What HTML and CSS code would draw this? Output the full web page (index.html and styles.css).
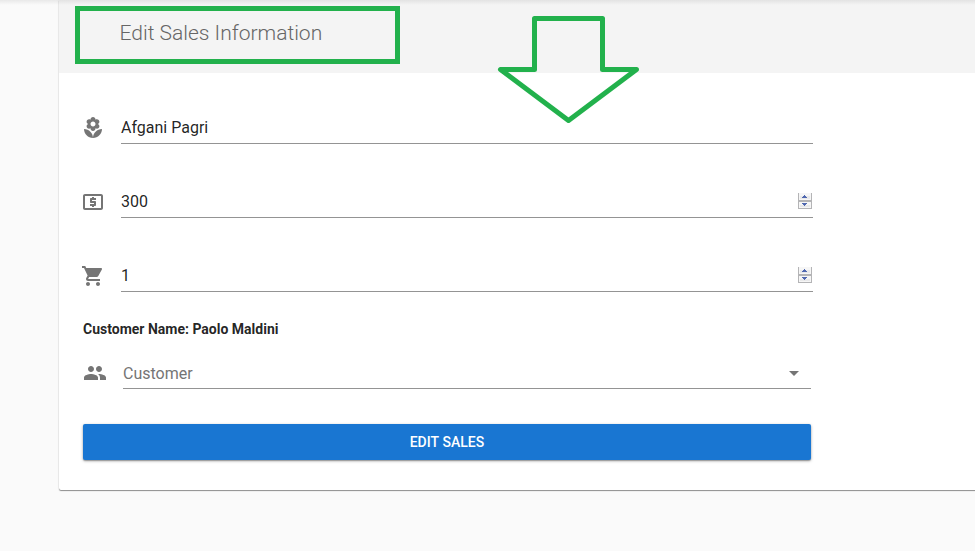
FILE: index.html
```html
<!DOCTYPE html>
<html lang="en">
<head>
<meta charset="utf-8">
<title>Edit Sales Information</title>
<link rel="stylesheet" href="styles.css">
</head>
<body>
<main class="card">
  <header class="card-header"><h1 class="title">Edit Sales Information</h1></header>
  <form class="form">
    <div class="row">
      <svg class="icon" viewBox="0 0 24 24"><path d="M12 22c4.970 0 9-4.030 9-9-4.970 0-9 4.030-9 9zM5.600 10.250c0 1.380 1.120 2.500 2.500 2.500.53 0 1.010-.16 1.420-.44l-.02.19c0 1.380 1.120 2.500 2.500 2.500s2.500-1.120 2.500-2.500l-.02-.19c.4.28.89.44 1.420.44 1.380 0 2.500-1.120 2.500-2.500 0-1-.59-1.850-1.430-2.250.84-.4 1.430-1.250 1.430-2.250 0-1.380-1.120-2.500-2.500-2.500-.53 0-1.010.16-1.420.44l.02-.19C14.500 2.120 13.380 1 12 1S9.500 2.120 9.500 3.500l.02.19c-.4-.28-.89-.44-1.420-.44-1.380 0-2.500 1.120-2.500 2.500 0 1 .59 1.850 1.430 2.250-.84.4-1.430 1.250-1.430 2.250zM12 5.500c1.380 0 2.500 1.120 2.500 2.500s-1.120 2.500-2.500 2.500S9.500 9.380 9.500 8s1.120-2.500 2.500-2.500zM3 13c0 4.970 4.030 9 9 9 0-4.970-4.030-9-9-9z"/></svg>
      <div class="field"><span class="value">Afgani Pagri</span></div>
    </div>
    <div class="row">
      <svg class="icon" viewBox="0 0 24 24"><path d="M11 17h2v-1h1c.55 0 1-.45 1-1v-3c0-.55-.45-1-1-1h-3v-1h4V8h-2V7h-2v1h-1c-.55 0-1 .45-1 1v3c0 .55.45 1 1 1h3v1H9v2h2v1zM20 4H4c-1.110 0-1.990.89-1.990 2L2 18c0 1.110.89 2 2 2h16c1.110 0 2-.89 2-2V6c0-1.110-.89-2-2-2zm0 14H4V6h16v12z"/></svg>
      <div class="field"><span class="value">300</span>
        <svg class="spinner" viewBox="0 0 14 16" shape-rendering="crispEdges"><path fill="#b4b4b6" d="M0 0h14v16H0z"/><path fill="#f6f6f6" d="M1 0h12v7H1zM1 9h12v6H1z"/><path fill="#e9e9ea" d="M2 3h10v3H2zM2 12h10v2H2z"/><path fill="#5068b0" d="M6 2h1v1h1v1h1v1H4V4h1V3h1zM4 10h5v1H8v1H7v1H6v-1H5v-1H4z"/></svg>
      </div>
    </div>
    <div class="row">
      <svg class="icon" viewBox="0 0 24 24"><path d="M7 18c-1.100 0-1.990.9-1.990 2S5.900 22 7 22s2-.9 2-2-.9-2-2-2zM1 2v2h2l3.600 7.590-1.350 2.450c-.16.28-.25.61-.25.96 0 1.100.9 2 2 2h12v-2H7.420c-.14 0-.25-.11-.25-.25l.03-.12.9-1.630h7.450c.75 0 1.410-.41 1.750-1.030l3.580-6.490c.08-.14.12-.31.12-.48 0-.55-.45-1-1-1H5.210l-.94-2H1zm16 16c-1.100 0-1.990.9-1.990 2s.89 2 1.990 2 2-.9 2-2-.9-2-2-2z"/></svg>
      <div class="field"><span class="value">1</span>
        <svg class="spinner" viewBox="0 0 14 16" shape-rendering="crispEdges"><path fill="#b4b4b6" d="M0 0h14v16H0z"/><path fill="#f6f6f6" d="M1 0h12v7H1zM1 9h12v6H1z"/><path fill="#e9e9ea" d="M2 3h10v3H2zM2 12h10v2H2z"/><path fill="#5068b0" d="M6 2h1v1h1v1h1v1H4V4h1V3h1zM4 10h5v1H8v1H7v1H6v-1H5v-1H4z"/></svg>
      </div>
    </div>
    <p class="customer-name">Customer Name: Paolo Maldini</p>
    <div class="row row-select">
      <svg class="icon" viewBox="0 0 24 24"><path d="M16 11c1.660 0 2.990-1.340 2.990-3S17.660 5 16 5c-1.660 0-3 1.340-3 3s1.340 3 3 3zm-8 0c1.660 0 2.990-1.340 2.990-3S9.660 5 8 5C6.340 5 5 6.340 5 8s1.340 3 3 3zm0 2c-2.330 0-7 1.170-7 3.500V19h14v-2.500c0-2.330-4.670-3.500-7-3.500zm8 0c-.29 0-.62.02-.97.05 1.160.84 1.970 1.970 1.970 3.450V19h6v-2.500c0-2.330-4.670-3.500-7-3.500z"/></svg>
      <div class="field"><span class="value placeholder">Customer</span>
        <svg class="caret" viewBox="0 0 10 5"><path d="M0 0h10L5 5z"/></svg>
      </div>
    </div>
    <button class="submit" type="button">EDIT SALES</button>
  </form>
</main>
<div class="highlight"></div>
<svg class="arrow" viewBox="0 0 144 112"><path d="M38.500 6.500h68v51H140.500L72.500 108.500 4.500 57.500h34z"/></svg>
</body>
</html>
```
FILE: styles.css
```css
* { box-sizing: border-box; }

body {
  margin: 0;
  height: 551px;
  overflow: hidden;
  position: relative;
  background: #fafafa;
  font-family: Roboto, sans-serif;
  color: rgba(0, 0, 0, .87);
}

body::before {
  content: "";
  position: absolute;
  inset: 0 0 auto;
  height: 5px;
  z-index: 1;
  background: linear-gradient(rgba(0, 0, 0, .07), transparent);
}

.card {
  height: 490px;
  margin-left: 59px;
  margin-right: -10px;
  background: #fff;
  border-radius: 0 0 2px 2px;
  box-shadow: 0 1px 1px rgba(0, 0, 0, .42), 0 0 2px rgba(0, 0, 0, .12);
}

.card-header {
  height: 73px;
  padding: 18px 60.5px 0;
  background: #f4f4f4;
}

.title {
  margin: 0;
  font-size: 21px;
  font-weight: 300;
  line-height: 30px;
  color: #666;
}

.form {
  width: 754px;
  padding: 39px 0 0 22px;
}

.row {
  display: flex;
  align-items: flex-start;
  gap: 16px;
  height: 32px;
  margin-bottom: 42px;
}

.icon {
  flex: none;
  width: 24px;
  height: 24px;
  margin-top: 4px;
  fill: #757575;
}

.field {
  flex: 1;
  display: flex;
  justify-content: space-between;
  height: 32px;
  border-bottom: 1px solid #949494;
}

.value { font-size: 16px; line-height: 31px; }

.placeholder {
  line-height: 33px;
  color: #757575;
}

.spinner {
  width: 14px;
  height: 16px;
  margin: 7px 1px 0 0;
}

.customer-name {
  margin: -15px 0 18px 2px;
  font-size: 14px;
  font-weight: 700;
  line-height: 20px;
}

.row-select { margin: 0 2px 35px; }

.caret {
  width: 10px;
  height: 5px;
  margin: 14px 12.5px 0 0;
  fill: #757575;
}

.submit {
  display: block;
  width: 728px;
  height: 36px;
  margin-left: 2px;
  padding: 0;
  border: 0;
  border-radius: 2px;
  background: #1976d2;
  color: #fff;
  font: 500 14px/36px Roboto, sans-serif;
  letter-spacing: .05px;
  box-shadow: 0 1px 3px rgba(0, 0, 0, .35), 0 1px 1px rgba(0, 0, 0, .2);
}

.highlight {
  position: absolute;
  left: 75px;
  top: 6px;
  width: 325px;
  height: 58px;
  border: 5px solid #22b14c;
}

.arrow {
  position: absolute;
  left: 496px;
  top: 12px;
  width: 144px;
  height: 112px;
  fill: none;
  stroke: #22b14c;
  stroke-width: 5;
  stroke-linejoin: round;
}
```
